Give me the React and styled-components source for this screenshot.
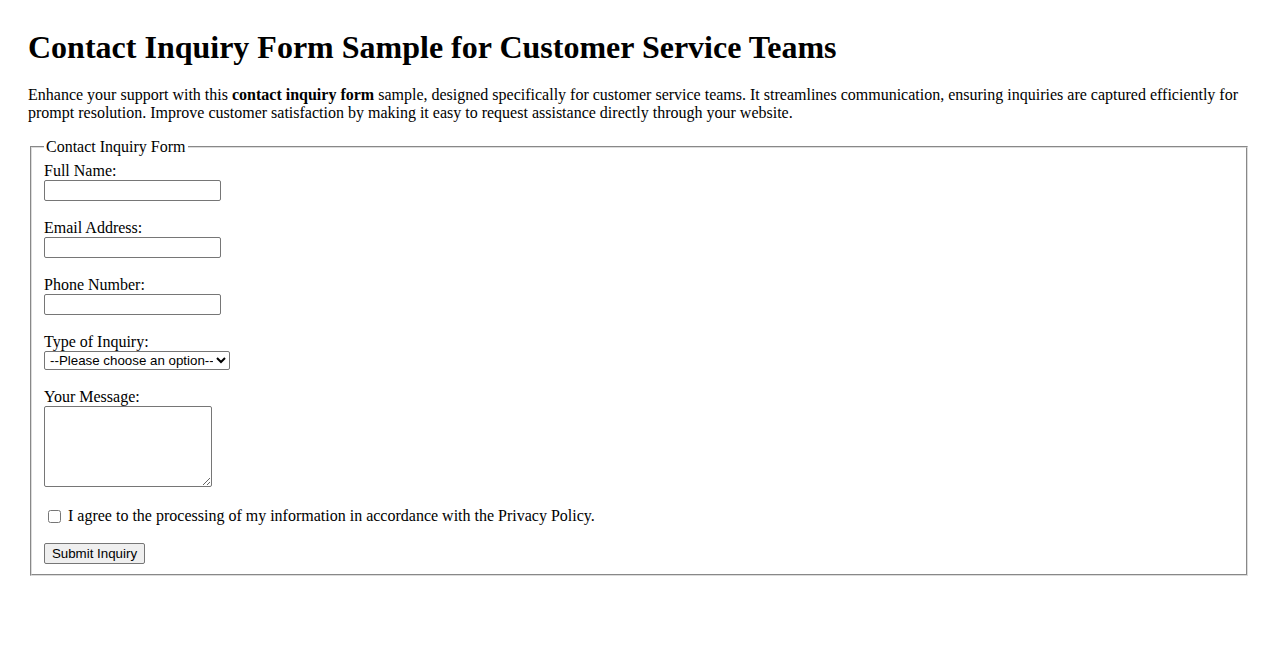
import React from 'react'
import styled, { createGlobalStyle } from 'styled-components'

const GlobalStyle = createGlobalStyle`
    body {
        margin: 0;
        background: #ffffff;
        color: #000000;
        font-family: "Liberation Serif", "Times New Roman", serif;
        font-size: 16px;
    }
`

const Page = styled.div`
    padding: 29px 28px 28px;
`

const Title = styled.h1`
    font-size: 32px;
    font-weight: bold;
    line-height: 37px;
    margin: 0 0 20px;
`

const Intro = styled.p`
    margin: 0 0 16px;
    line-height: 18px;
`

const Fieldset = styled.fieldset`
    margin: 0 2px;
    padding: 6px 12px 10px;
    border: 2px groove #dcdcdc;
    display: flex;
    flex-direction: column;
    gap: 18px;
`

const Legend = styled.legend`
    padding: 0 2px;
    line-height: 18px;
`

const Field = styled.div`
    display: flex;
    flex-direction: column;
    align-items: flex-start;
`

const Label = styled.label`
    line-height: 18px;
`

const controlFont = `
    font-family: "Liberation Sans", Arial, sans-serif;
    font-size: 13.33px;
    box-sizing: border-box;
    color: #000000;
`

const TextInput = styled.input`
    ${controlFont}
    width: 177px;
    height: 21px;
    border: 1px solid #767676;
    border-radius: 2px;
    padding: 1px 2px;
    background: #ffffff;
`

const Select = styled.select`
    ${controlFont}
    width: 186px;
    height: 19px;
    border: 1px solid #767676;
    border-radius: 2px;
    padding: 0 0 0 1px;
    background: #ffffff;
`

const TextArea = styled.textarea`
    ${controlFont}
    width: 168px;
    height: 81px;
    border: 1px solid #767676;
    border-radius: 2px;
    padding: 2px;
    resize: both;
`

const CheckRow = styled.div`
    display: flex;
    align-items: center;
    line-height: 20px;
    padding-top: 1px;
`

const Checkbox = styled.input`
    width: 13px;
    height: 13px;
    margin: 0 7px 0 4px;
`

const SubmitButton = styled.button`
    ${controlFont}
    align-self: flex-start;
    width: 101px;
    height: 21px;
    padding: 1px 6px;
    margin-top: -1px;
    border: 1px solid #767676;
    border-radius: 2px;
    background: #efefef;
`

const fields = [
    { id: 'fullName', label: 'Full Name:', type: 'text' },
    { id: 'email', label: 'Email Address:', type: 'email' },
    { id: 'phone', label: 'Phone Number:', type: 'tel' },
]

const App = () => {
    return (
        <Page>
            <GlobalStyle />
            <Title>Contact Inquiry Form Sample for Customer Service Teams</Title>
            <Intro>
                Enhance your support with this <strong>contact inquiry form</strong> sample, designed specifically for customer service teams. It streamlines communication, ensuring inquiries are captured efficiently for prompt resolution. Improve customer satisfaction by making it easy to request assistance directly through your website.
            </Intro>

            <form onSubmit={e => e.preventDefault()}>
                <Fieldset>
                    <Legend>Contact Inquiry Form</Legend>

                    {fields.map(f => (
                        <Field key={f.id}>
                            <Label htmlFor={f.id}>{f.label}</Label>
                            <TextInput id={f.id} type={f.type} />
                        </Field>
                    ))}

                    <Field>
                        <Label htmlFor="inquiryType">Type of Inquiry:</Label>
                        <Select id="inquiryType" defaultValue="">
                            <option value="">--Please choose an option--</option>
                            <option value="general">General Question</option>
                            <option value="support">Technical Support</option>
                            <option value="billing">Billing</option>
                        </Select>
                    </Field>

                    <Field>
                        <Label htmlFor="message">Your Message:</Label>
                        <TextArea id="message" />
                    </Field>

                    <CheckRow>
                        <Checkbox type="checkbox" id="privacy" />
                        <label htmlFor="privacy">I agree to the processing of my information in accordance with the Privacy Policy.</label>
                    </CheckRow>

                    <SubmitButton type="submit">Submit Inquiry</SubmitButton>
                </Fieldset>
            </form>
        </Page>
    )
}

export default App
